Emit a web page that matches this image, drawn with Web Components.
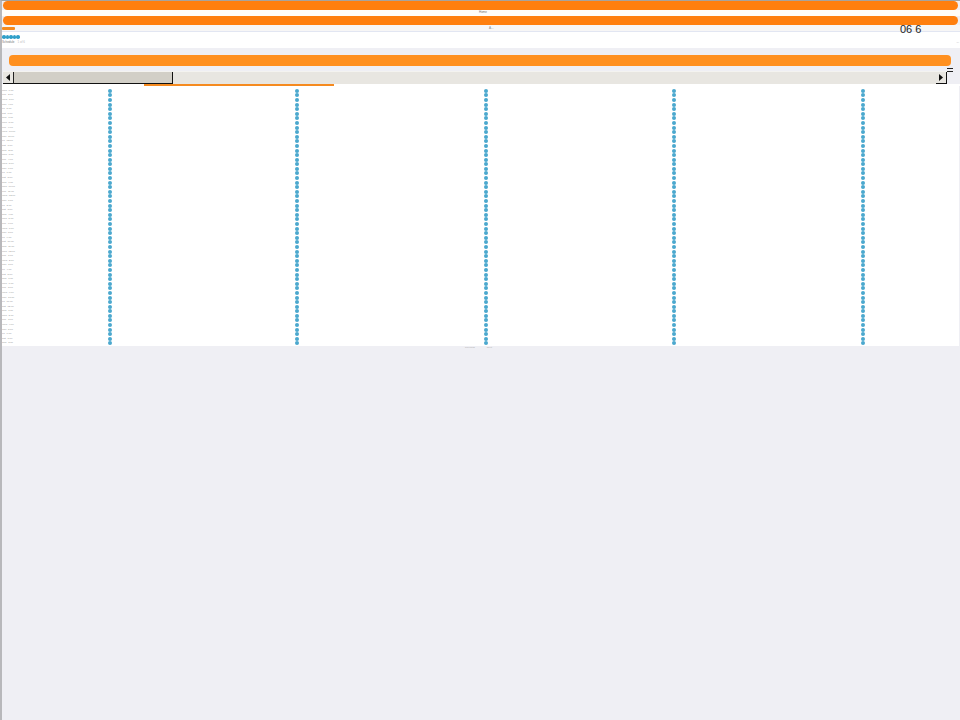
<!DOCTYPE html>
<html>
<head>
<meta charset="utf-8">
<title>Schedule</title>
<style>
html, body { margin: 0; padding: 0; background: #efeff4; font-family: "Liberation Sans", sans-serif; }
</style>
</head>
<body>
<app-shell>
  <orange-bar></orange-bar>
  <tiny-strip label="Home" offset="477"></tiny-strip>
  <orange-bar></orange-bar>
  <sub-strip></sub-strip>
  <info-panel></info-panel>
  <wide-bar></wide-bar>
  <scroll-row></scroll-row>
  <tab-line></tab-line>
  <dot-grid></dot-grid>
  <grid-foot></grid-foot>
</app-shell>
<script>
class appShell extends HTMLElement {
    constructor() {
        super()
        this.attachShadow({mode: "open"});
        this.shadowRoot.innerHTML = `
        <style>
        :host { display: block; width: 960px; height: 720px; box-sizing: border-box; overflow: hidden;
            border-left: 2px solid #b8b8bb; border-top: 1px solid #a8a39c; }
        </style>
        <slot></slot>`;
    }
}
customElements.define("app-shell", appShell);

class orangeBar extends HTMLElement {
    constructor() {
        super()
        this.attachShadow({mode: "open"});
        this.shadowRoot.innerHTML = `
        <style>
        :host { display: block; height: 9px; margin: 0 2px 0 1px; background: #ff7f0e; border-radius: 5px; }
        </style>`;
    }
}
customElements.define("orange-bar", orangeBar);

class tinyStrip extends HTMLElement {
    constructor() {
        super()
        this.attachShadow({mode: "open"});
        this.shadowRoot.innerHTML = `
        <style>
        :host { display: block; height: 6px; background: #fffdf9; color: #777; font-size: 3px; line-height: 5px; }
        span { display: block; padding-left: ${this.getAttribute("offset")}px; }
        </style>
        <span>${this.getAttribute("label")}</span>`;
    }
}
customElements.define("tiny-strip", tinyStrip);

class subStrip extends HTMLElement {
    constructor() {
        super()
        this.attachShadow({mode: "open"});
        this.shadowRoot.innerHTML = `
        <style>
        :host { display: flex; position: relative; height: 6px; align-items: center; background: #f7f6f6;
            border-bottom: 1px solid #e2e6f2; font-size: 3px; color: #888; }
        .pill { width: 13px; height: 3px; background: #f58a1f; border-radius: 1px; }
        .mid { margin-left: 474px; }
        .time { position: absolute; left: 898px; top: -3px; font-size: 11px; line-height: 14px; color: #222; white-space: nowrap; }
        </style>
        <div class="pill"></div>
        <div class="mid">A...</div>
        <div class="time">06 6</div>`;
    }
}
customElements.define("sub-strip", subStrip);

class infoPanel extends HTMLElement {
    constructor() {
        super()
        this.attachShadow({mode: "open"});
        const dots = "<i></i>".repeat(5);
        this.shadowRoot.innerHTML = `
        <style>
        :host { display: block; height: 16px; box-sizing: border-box; padding: 3px 1px 0 0; background: #fff; }
        .dots { display: flex; height: 4px; }
        i { width: 3.6px; height: 3.6px; border-radius: 50%; background: #2f9fc9; }
        .meta { display: flex; justify-content: space-between; margin-top: 1px; font-size: 3px; line-height: 4px; color: #777; }
        .meta b { font-weight: normal; color: #bbb; margin-left: 3px; }
        </style>
        <div class="dots">${dots}</div>
        <div class="meta"><span>Schedule<b>1 of 6</b></span><span>...</span></div>`;
    }
}
customElements.define("info-panel", infoPanel);

class wideBar extends HTMLElement {
    constructor() {
        super()
        this.attachShadow({mode: "open"});
        this.shadowRoot.innerHTML = `
        <style>
        :host { display: block; height: 11px; margin: 7px 9px 5px 7px; background: #ff9020; border-radius: 4px; }
        </style>`;
    }
}
customElements.define("wide-bar", wideBar);

class scrollRow extends HTMLElement {
    constructor() {
        super()
        this.attachShadow({mode: "open"});
        this.shadowRoot.innerHTML = `
        <style>
        :host { display: flex; position: relative; height: 13px; width: 944px; margin-left: 1px; background: #e8e6e1; border-top: 1px solid #f4f3f0; box-sizing: border-box; }
        .btn { width: 10px; display: flex; align-items: center; justify-content: center; background: #e8e6e1; }
        .left { border-right: 1px solid #222; border-bottom: 1px solid #111; }
        .right { margin-left: auto; width: 10px; border-right: 1px solid #111; border-bottom: 1px solid #111; }
        .thumb { width: 158px; background: #d2cfc7; border-right: 1px solid #111; border-bottom: 1px solid #111; }
        .menu { position: absolute; left: 944px; top: -4px; width: 6px; height: 2px; border-top: 1px solid #222; border-bottom: 1px solid #222; }
        </style>
        <div class="btn left"><svg width="4" height="7" viewBox="0 0 4 7"><path d="M4 0V7L0 3.5Z" fill="#111"/></svg></div>
        <div class="thumb"></div>
        <div class="btn right"><svg width="4" height="7" viewBox="0 0 4 7"><path d="M0 0V7L4 3.5Z" fill="#111"/></svg></div>
        <div class="menu"></div>`;
    }
}
customElements.define("scroll-row", scrollRow);

class tabLine extends HTMLElement {
    constructor() {
        super()
        this.attachShadow({mode: "open"});
        this.shadowRoot.innerHTML = `
        <style>
        :host { display: block; height: 2px; background: #fff; padding-left: 142px; }
        div { width: 190px; height: 2px; background: #f58a1f; }
        </style>
        <div></div>`;
    }
}
customElements.define("tab-line", tabLine);

class dotGrid extends HTMLElement {
    constructor() {
        super()
        this.attachShadow({mode: "open"});
        const labels = ["Mon", "Tue", "Wed", "Thu", "Fri", "Sat", "Sun"];
        let rows = "";
        for (let i = 0; i < 56; i++) {
            rows += `<div class="row"><span>${labels[i % 7]} ${i % 12 + 1}:00</span>` + "<i></i>".repeat(5) + `</div>`;
        }
        this.shadowRoot.innerHTML = `
        <style>
        :host { display: block; height: 260px; overflow: hidden; box-sizing: border-box; padding-top: 2.5px; background: #fff; margin-right: 1px; }
        .row { display: grid; grid-template-columns: 106px 187px 189px 188px 189px 90px; height: 4.6px; align-items: center; }
        span { font-size: 2.5px; line-height: 4px; color: #999; white-space: nowrap; word-spacing: 1px; }
        i { display: block; width: 4px; height: 4px; border-radius: 50%; background: #4ba8ce; }
        </style>
        ${rows}`;
    }
}
customElements.define("dot-grid", dotGrid);

class gridFoot extends HTMLElement {
    constructor() {
        super()
        this.attachShadow({mode: "open"});
        this.shadowRoot.innerHTML = `
        <style>
        :host { display: flex; justify-content: center; gap: 12px; height: 4px; font-size: 2.5px; line-height: 4px; color: #aaa; padding-right: 5px; }
        </style>
        <span>Previous</span><span>Next</span>`;
    }
}
customElements.define("grid-foot", gridFoot);
</script>
</body>
</html>
